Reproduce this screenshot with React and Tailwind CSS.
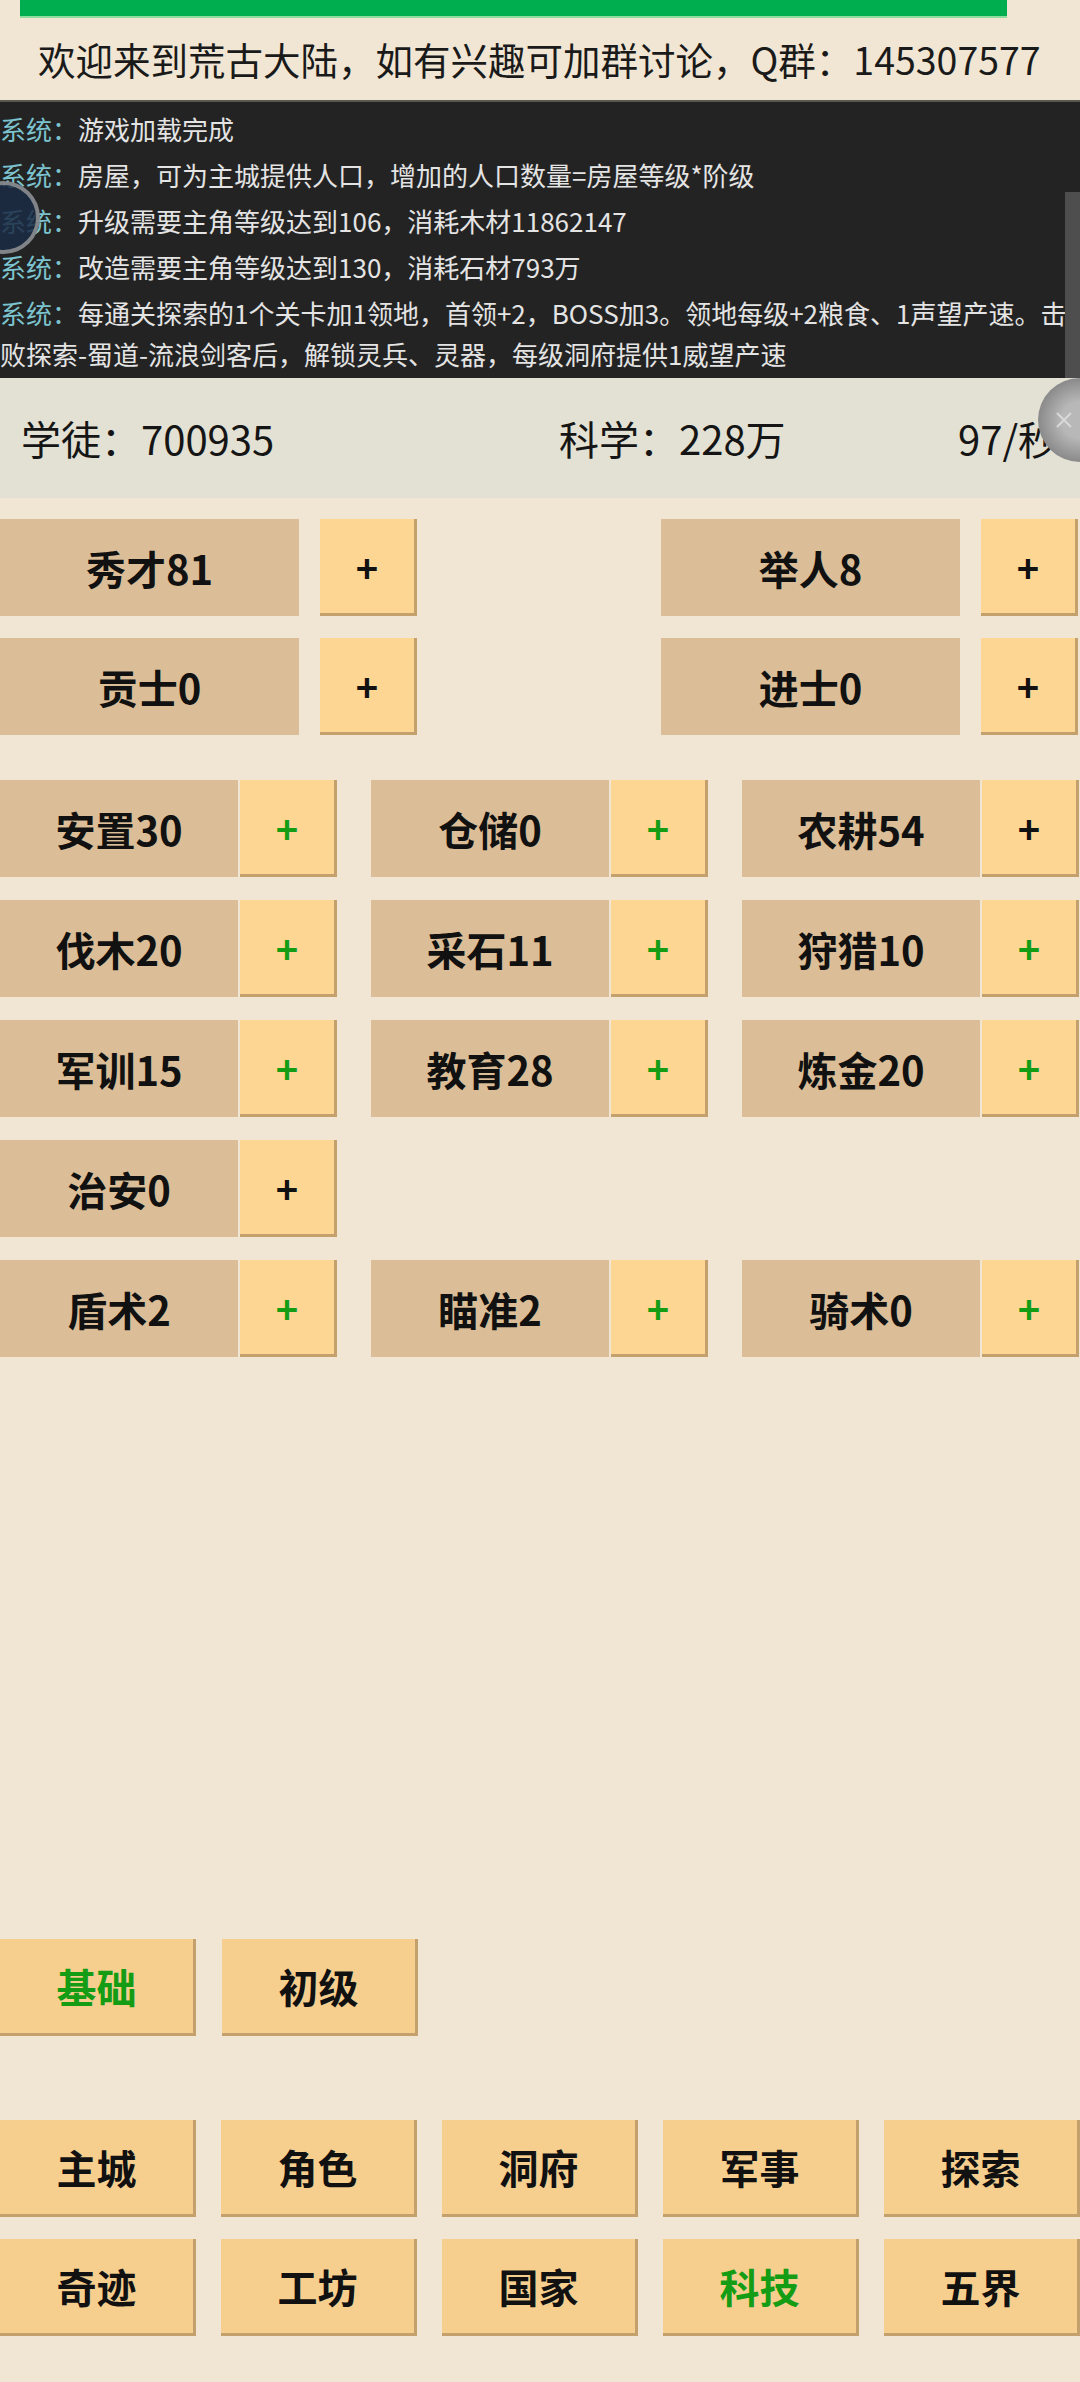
import React from "react";

const FONT = { fontFamily: '"Noto Sans CJK SC", "Noto Sans", sans-serif' };

const logs = [
  ["游戏加载完成"],
  ["房屋，可为主城提供人口，增加的人口数量=房屋等级*阶级"],
  ["升级需要主角等级达到106，消耗木材11862147"],
  ["改造需要主角等级达到130，消耗石材793万"],
  ["每通关探索的1个关卡加1领地，首领+2，BOSS加3。领地每级+2粮食、1声望产速。击", "败探索-蜀道-流浪剑客后，解锁灵兵、灵器，每级洞府提供1威望产速"],
];

const skillRows = [
  [["安置30", true], ["仓储0", true], ["农耕54", false]],
  [["伐木20", true], ["采石11", true], ["狩猎10", true]],
  [["军训15", true], ["教育28", true], ["炼金20", true]],
  [["治安0", false]],
  [["盾术2", true], ["瞄准2", true], ["骑术0", true]],
];

const navRows = [
  [["主城"], ["角色"], ["洞府"], ["军事"], ["探索"]],
  [["奇迹"], ["工坊"], ["国家"], ["科技", true], ["五界"]],
];

function PlusBtn({ green }) {
  return (
    <div
      className={`w-[97px] h-[97px] flex items-center justify-center bg-[#fed694] border-r-[3px] border-b-[3px] border-[#c3a06c] text-[38px] font-bold ${
        green ? "text-[#149c14]" : "text-[#111]"
      }`}
    >
      +
    </div>
  );
}

function Label({ text, w }) {
  return (
    <div className={`${w} h-[97px] flex items-center justify-center bg-[#dbbe97] text-[40px] font-bold text-[#111]`}>
      {text}
    </div>
  );
}

function NavBtn({ text, green }) {
  return (
    <div
      className={`w-[196px] h-[97px] flex items-center justify-center bg-[#f6cf8f] border-r-[3px] border-b-[3px] border-[#c3a06c] text-[40px] font-bold ${
        green ? "text-[#149c14]" : "text-[#111]"
      }`}
    >
      {text}
    </div>
  );
}

export default function App() {
  return (
    <div className="relative w-[1080px] h-[2382px] overflow-hidden bg-[#f1e6d3]" style={FONT}>
      {/* top progress */}
      <div className="h-[18px] flex">
        <div className="ml-[20px] w-[987px] h-[18px] bg-[#00ad4f] border-b-2 border-[#8edc9e]" />
      </div>
      <div className="h-[82px] flex items-center pl-[38px] text-[37.5px] text-[#1a1a1a] whitespace-nowrap">
        欢迎来到荒古大陆，如有兴趣可加群讨论，Q群：145307577
      </div>

      {/* log panel */}
      <div className="h-[278px] bg-[#232323] border-t-2 border-[#5a5750] pt-[6px] text-[26px] leading-[41px] text-[#e4e4e4] whitespace-nowrap">
        {logs.map((lines, i) => (
          <div key={i} className="mb-[5px]">
            <span className="text-[#7cc3cf]">系统：</span>
            {lines[0]}
            {lines[1] && (
              <>
                <br />
                {lines[1]}
              </>
            )}
          </div>
        ))}
      </div>

      {/* stats */}
      <div className="h-[120px] bg-[#e3e1d3] flex items-center text-[40px] text-[#151515] whitespace-nowrap">
        <div className="w-[559px] pl-[21px]">学徒：700935</div>
        <div className="w-[399px]">科学：228万</div>
        <div>97/秒</div>
      </div>

      {/* ranks */}
      <div className="mt-[21px] flex flex-col gap-[22px]">
        {[
          ["秀才81", "举人8"],
          ["贡士0", "进士0"],
        ].map((row, i) => (
          <div key={i} className="flex gap-[244px]">
            {row.map((t) => (
              <div key={t} className="flex gap-[21px]">
                <Label text={t} w="w-[299px]" />
                <PlusBtn green={false} />
              </div>
            ))}
          </div>
        ))}
      </div>

      {/* skills */}
      <div className="mt-[45px] flex flex-col gap-[23px]">
        {skillRows.map((row, i) => (
          <div key={i} className="flex gap-[34px]">
            {row.map(([t, g]) => (
              <div key={t} className="flex gap-[2px]">
                <Label text={t} w="w-[238px]" />
                <PlusBtn green={g} />
              </div>
            ))}
          </div>
        ))}
      </div>

      {/* sub tabs */}
      <div className="mt-[582px] flex gap-[26px]">
        <NavBtn text="基础" green />
        <NavBtn text="初级" />
      </div>

      {/* nav */}
      <div className="mt-[84px] flex flex-col gap-[22px]">
        {navRows.map((row, i) => (
          <div key={i} className="flex gap-[25px]">
            {row.map(([t, g]) => (
              <NavBtn key={t} text={t} green={g} />
            ))}
          </div>
        ))}
      </div>

      {/* overlays */}
      <div className="absolute right-0 top-[192px] w-[15px] h-[186px] bg-[#4e4e4e]" />
      <div className="absolute left-[-33px] top-[181px] w-[73px] h-[73px] rounded-full bg-[#1b2c44]/85 border-[4px] border-[#9a9a9a]/80" />
      <div className="absolute left-[1038px] top-[378px] w-[84px] h-[84px] rounded-full bg-[radial-gradient(circle,#b8b8b8_30%,#858585_75%,#6a6a6a_100%)] flex items-center pl-[16px]">
        <svg width="20" height="20" viewBox="0 0 20 20" stroke="#d8d8d8" strokeWidth="2" fill="none">
          <path d="M3 3 L17 17 M17 3 L3 17" />
        </svg>
      </div>
    </div>
  );
}
